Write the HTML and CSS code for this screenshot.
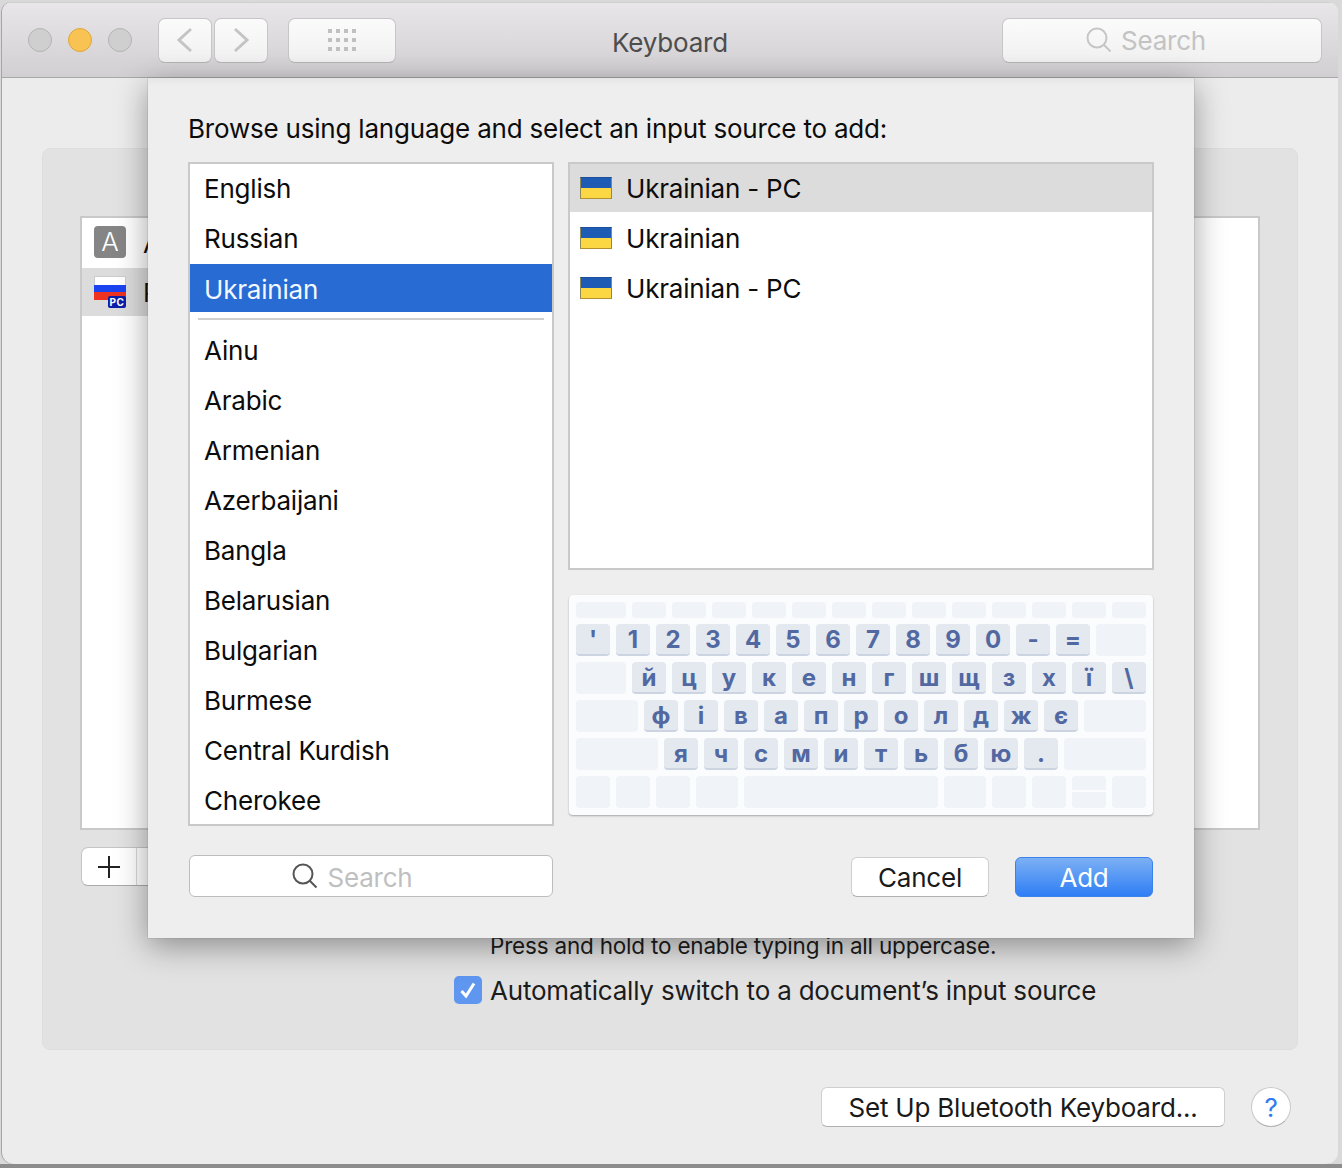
FILE: index.html
```html
<!DOCTYPE html>
<html lang="en">
<head>
    <meta charset="UTF-8">
    <title>Keyboard</title>
    <link rel="stylesheet" href="styles.css">
</head>
<body>
    <div class="window">
        <header class="titlebar">
            <div class="lights">
                <span class="light"></span>
                <span class="light light-min"></span>
                <span class="light"></span>
            </div>
            <div class="nav">
                <button class="tool tool-nav">
                    <svg width="18" height="26" viewBox="0 0 18 26"><path d="M15 2 L3 13 L15 24" fill="none" stroke="#c4c4c4" stroke-width="3"/></svg>
                </button>
                <button class="tool tool-nav">
                    <svg width="18" height="26" viewBox="0 0 18 26"><path d="M3 2 L15 13 L3 24" fill="none" stroke="#c4c4c4" stroke-width="3"/></svg>
                </button>
            </div>
            <button class="tool tool-grid">
                <svg width="30" height="22" viewBox="0 0 30 22" fill="#c0c0c0">
                    <rect x="1" y="0" width="4" height="4"/><rect x="9" y="0" width="4" height="4"/><rect x="17" y="0" width="4" height="4"/><rect x="25" y="0" width="4" height="4"/>
                    <rect x="1" y="9" width="4" height="4"/><rect x="9" y="9" width="4" height="4"/><rect x="17" y="9" width="4" height="4"/><rect x="25" y="9" width="4" height="4"/>
                    <rect x="1" y="18" width="4" height="4"/><rect x="9" y="18" width="4" height="4"/><rect x="17" y="18" width="4" height="4"/><rect x="25" y="18" width="4" height="4"/>
                </svg>
            </button>
            <div class="title">Keyboard</div>
            <div class="tool top-search">
                <svg width="26" height="26" viewBox="0 0 26 26"><circle cx="11" cy="11" r="9.5" fill="none" stroke="#c6c6c6" stroke-width="2"/><path d="M17.5 17.5 L24.500 24.500" stroke="#c6c6c6" stroke-width="2"/></svg>
                <span>Search</span>
            </div>
        </header>

        <main class="content">
            <section class="panel">
                <div class="source-list">
                    <div class="source-row">
                        <span class="icon-a">A</span>
                        <span>ABC</span>
                    </div>
                    <div class="source-row source-row-on">
                        <span class="icon-ru">
                            <i class="ru-white"></i><i class="ru-blue"></i><i class="ru-red"></i>
                            <b class="pc-badge">PC</b>
                        </span>
                        <span>Ru</span>
                    </div>
                </div>
                <div class="plus-minus">
                    <span class="plus-cell">
                        <svg width="24" height="24" viewBox="0 0 24 24"><path d="M12 1 V23 M1 12 H23" stroke="#222" stroke-width="2"/></svg>
                    </span>
                    <span class="minus-cell"></span>
                </div>
                <p class="hold-note">Press and hold to enable typing in all uppercase.</p>
                <div class="auto-switch">
                    <span class="checkbox">
                        <svg width="20" height="20" viewBox="0 0 20 20"><path d="M3.500 11 L8 16 L16 3.500" fill="none" stroke="#fff" stroke-width="3"/></svg>
                    </span>
                    <span class="auto-label">Automatically switch to a document’s input source</span>
                </div>
            </section>
            <footer class="bottom-bar">
                <button class="btn btn-bluetooth">Set Up Bluetooth Keyboard...</button>
                <button class="help">?</button>
            </footer>
        </main>

        <!-- hoja de idiomas, queda encima de la ventana -->
        <div class="sheet">
            <h1 class="sheet-title">Browse using language and select an input source to add:</h1>
            <div class="columns">
                <div class="col-left">
                    <ul class="lang-list">
                        <li>English</li>
                        <li>Russian</li>
                        <li class="lang-on">Ukrainian</li>
                        <li class="lang-sep"></li>
                        <li>Ainu</li>
                        <li>Arabic</li>
                        <li>Armenian</li>
                        <li>Azerbaijani</li>
                        <li>Bangla</li>
                        <li>Belarusian</li>
                        <li>Bulgarian</li>
                        <li>Burmese</li>
                        <li>Central Kurdish</li>
                        <li>Cherokee</li>
                    </ul>
                    <div class="sheet-search">
                        <svg width="26" height="26" viewBox="0 0 26 26"><circle cx="11" cy="11" r="9.5" fill="none" stroke="#555" stroke-width="2"/><path d="M17.5 17.5 L24.500 24.500" stroke="#555" stroke-width="2"/></svg>
                        <span>Search</span>
                    </div>
                </div>
                <div class="col-right">
                    <ul class="input-list">
                        <li class="input-on"><span class="flag-ua"></span>Ukrainian - PC</li>
                        <li><span class="flag-ua"></span>Ukrainian</li>
                        <li><span class="flag-ua"></span>Ukrainian - PC</li>
                    </ul>
                    <div class="keyboard">
                        <div class="kb-row kb-row-fn">
                            <span class="k k-50"></span>
                            <span class="k"></span><span class="k"></span><span class="k"></span><span class="k"></span><span class="k"></span><span class="k"></span><span class="k"></span><span class="k"></span><span class="k"></span><span class="k"></span><span class="k"></span><span class="k"></span><span class="k"></span>
                        </div>
                        <div class="kb-row">
                            <span class="k k-on">'</span><span class="k k-on">1</span><span class="k k-on">2</span><span class="k k-on">3</span><span class="k k-on">4</span><span class="k k-on">5</span><span class="k k-on">6</span><span class="k k-on">7</span><span class="k k-on">8</span><span class="k k-on">9</span><span class="k k-on">0</span><span class="k k-on">-</span><span class="k k-on">=</span>
                            <span class="k k-50"></span>
                        </div>
                        <div class="kb-row">
                            <span class="k k-50"></span>
                            <span class="k k-on">й</span><span class="k k-on">ц</span><span class="k k-on">у</span><span class="k k-on">к</span><span class="k k-on">е</span><span class="k k-on">н</span><span class="k k-on">г</span><span class="k k-on">ш</span><span class="k k-on">щ</span><span class="k k-on">з</span><span class="k k-on">х</span><span class="k k-on">ї</span><span class="k k-on">\</span>
                        </div>
                        <div class="kb-row">
                            <span class="k k-62"></span>
                            <span class="k k-on">ф</span><span class="k k-on">і</span><span class="k k-on">в</span><span class="k k-on">а</span><span class="k k-on">п</span><span class="k k-on">р</span><span class="k k-on">о</span><span class="k k-on">л</span><span class="k k-on">д</span><span class="k k-on">ж</span><span class="k k-on">є</span>
                            <span class="k k-62"></span>
                        </div>
                        <div class="kb-row">
                            <span class="k k-82"></span>
                            <span class="k k-on">я</span><span class="k k-on">ч</span><span class="k k-on">с</span><span class="k k-on">м</span><span class="k k-on">и</span><span class="k k-on">т</span><span class="k k-on">ь</span><span class="k k-on">б</span><span class="k k-on">ю</span><span class="k k-on">.</span>
                            <span class="k k-82"></span>
                        </div>
                        <div class="kb-row">
                            <span class="k"></span><span class="k"></span><span class="k"></span>
                            <span class="k k-42"></span>
                            <span class="k k-space"></span>
                            <span class="k k-42"></span>
                            <span class="k"></span><span class="k"></span>
                            <span class="k k-split"></span>
                            <span class="k"></span>
                        </div>
                    </div>
                    <div class="sheet-buttons">
                        <button class="btn btn-cancel">Cancel</button>
                        <button class="btn btn-add">Add</button>
                    </div>
                </div>
            </div>
        </div>
    </div>
</body>
</html>
```

FILE: styles.css
```css
* {
    box-sizing: border-box;
}

html, body {
    margin: 0;
    height: 100%;
}

body {
    background: linear-gradient(#d9d9d9 0, #d9d9d9 1164px, #8c8c8c 1164px);
    font-family: Inter, "Noto Sans", sans-serif;
    font-size: 26px;
    letter-spacing: -0.2px;
    color: #111;
    padding: 2px 4px 0 2px;
    overflow: hidden;
}

button {
    font: inherit;
    letter-spacing: inherit;
    padding: 0;
    cursor: pointer;
}

ul {
    list-style: none;
    margin: 0;
    padding: 0;
}

.window {
    position: relative;
    height: 1162px;
    background-color: #ececec;
    border-radius: 10px 10px 12px 12px;
    overflow: hidden;
    box-shadow: -1px 0 0 #a5a5a5;
}

/* barra de titulo */
.titlebar {
    display: flex;
    align-items: center;
    height: 76px;
    padding: 0 16px 0 26px;
    background: linear-gradient(#e8e6e8, #d1cfd1);
    border-bottom: 1px solid #a9a9a9;
    border-top: 1px solid #cfcfcf;
}

.lights {
    display: flex;
    gap: 16px;
    margin-right: 26px;
}

.light {
    width: 24px;
    height: 24px;
    border-radius: 50%;
    background-color: #d0cfd0;
    border: 1px solid #b5b4b5;
}

.light-min {
    background-color: #f8c353;
    border-color: #dea63c;
}

.nav {
    display: flex;
    gap: 2px;
    margin-right: 20px;
}

.tool {
    height: 45px;
    display: flex;
    align-items: center;
    justify-content: center;
    background: linear-gradient(#fbfbfb, #f1f1f1);
    border: 1px solid #c6c6c6;
    border-bottom-color: #b5b5b5;
    border-radius: 7px;
}

.tool-nav {
    width: 54px;
}

.tool-grid {
    width: 108px;
}

.title {
    flex: 1;
    text-align: center;
    color: #4d4d4d;
    padding-right: 58px;
    padding-top: 5px;
}

.top-search {
    width: 320px;
    gap: 9px;
    padding-right: 32px;
    color: #c3c3c3;
}

.top-search span {
    padding-top: 1px;
}

/* contenido detras de la hoja */
.content {
    padding: 70px 40px 0;
}

.panel {
    height: 902px;
    background-color: #e2e2e2;
    border: 1px solid #dedede;
    border-radius: 8px;
    padding: 67px 37px 0;
}

.source-list {
    height: 614px;
    background-color: #fff;
    border: 2px solid #c9c9c9;
}

.source-row {
    display: flex;
    align-items: center;
    gap: 17px;
    height: 50px;
    padding-left: 12px;
}

.source-row-on {
    width: 300px;
    height: 48px;
    background-color: #dcdcdc;
}

.icon-a {
    width: 32px;
    height: 32px;
    margin-top: -2px;
    background-color: #858585;
    border-radius: 4px;
    color: #fff;
    text-align: center;
    line-height: 32px;
    font-weight: 300;
}

.icon-ru {
    position: relative;
    width: 32px;
    height: 24px;
    display: flex;
    flex-direction: column;
    margin-top: -8px;
}

.icon-ru i {
    flex: 1;
}

.ru-white {
    background-color: #fff;
    border: 1px solid #ccc;
    border-bottom: none;
}

.ru-blue {
    background-color: #1b44f0;
}

.ru-red {
    background-color: #ee3322;
}

.pc-badge {
    position: absolute;
    right: 0;
    bottom: -8px;
    width: 18px;
    height: 12px;
    background-color: #0c1fa8;
    border-radius: 2px;
    color: #fff;
    font-size: 10px;
    line-height: 12px;
    text-align: center;
    letter-spacing: 0.5px;
}

.plus-minus {
    display: flex;
    width: 100px;
    height: 39px;
    margin-top: 17px;
    margin-left: 1px;
    background-color: #fff;
    border: 1px solid #c4c4c4;
    border-bottom-color: #aaa;
    border-radius: 7px;
}

.plus-cell {
    width: 55px;
    display: flex;
    align-items: center;
    justify-content: center;
    border-right: 1px solid #d8d8d8;
}

.hold-note {
    margin: 47px 0 0 410px;
    font-size: 22.500px;
    line-height: 26px;
    color: #1c1c1c;
}

.auto-switch {
    display: flex;
    align-items: center;
    gap: 8px;
    height: 30px;
    margin: 16px 0 0 374px;
    color: #1c1c1c;
}

.auto-label {
    padding-top: 1px;
}

.checkbox {
    width: 28px;
    height: 28px;
    display: flex;
    align-items: center;
    justify-content: center;
    background-color: #5f96ef;
    border-radius: 5px;
}

.bottom-bar {
    display: flex;
    align-items: center;
    justify-content: flex-end;
    gap: 26px;
    margin-top: 37px;
    padding-right: 7px;
}

.btn {
    height: 40px;
    background-color: #fff;
    border: 1px solid #cfcfcf;
    border-bottom-color: #b0b0b0;
    border-radius: 6px;
    color: #1a1a1a;
}

.btn-bluetooth {
    width: 404px;
}

.help {
    width: 40px;
    height: 40px;
    background-color: #fff;
    border: 1px solid #c9c9c9;
    border-bottom-color: #b0b0b0;
    border-radius: 50%;
    color: #2f7bf0;
}

/* hoja superpuesta */
.sheet {
    position: absolute;
    left: 146px;
    top: 76px;
    width: 1046px;
    height: 860px;
    padding: 35px 40px 0;
    background: linear-gradient(#e6e6e6 0, #eeeeee 8px);
    box-shadow: 0 0 1px #777, 0 8px 30px rgba(0, 0, 0, 0.38);
}

.sheet-title {
    margin: 0 0 17px;
    font-size: 26px;
    font-weight: 400;
    line-height: 32px;
    color: #0c0c0c;
}

.columns {
    display: flex;
    gap: 14px;
}

.col-left {
    width: 366px;
}

.col-right {
    width: 586px;
}

.lang-list {
    height: 664px;
    overflow: hidden;
    background-color: #fff;
    border: 2px solid #c9c9c9;
}

.lang-list li,
.input-list li {
    height: 50px;
    line-height: 50px;
    color: #0c0c0c;
}

.lang-list li {
    padding-left: 14px;
}

.lang-list .lang-on {
    height: 48px;
    margin-bottom: 2px;
    line-height: 51px;
    background-color: #286cd3;
    color: #f4f8ff;
}

.lang-list .lang-sep {
    height: 2px;
    margin: 6px 8px 6px;
    padding: 0;
    background-color: #cfcfcf;
}

.sheet-search {
    display: flex;
    align-items: center;
    justify-content: center;
    gap: 9px;
    height: 42px;
    margin: 29px 1px 0;
    padding-right: 37px;
    background-color: #fff;
    border: 1px solid #bdbdbd;
    border-radius: 6px;
    color: #bfbfbf;
}

.sheet-search span {
    padding-top: 2px;
}

.input-list {
    height: 408px;
    background-color: #fff;
    border: 2px solid #c9c9c9;
}

.input-list li {
    display: flex;
    align-items: center;
    gap: 14px;
    padding-left: 10px;
}

.input-list .input-on {
    height: 48px;
    margin-bottom: 2px;
    padding-top: 2px;
    background-color: #dcdcdc;
}

.flag-ua {
    width: 32px;
    height: 22px;
    background: linear-gradient(#1e5bb5 50%, #fbd743 50%);
    border: 1px solid #1d4f9a;
    border-bottom-color: #b2902d;
    border-left-color: #8a8a5a;
    border-right-color: #8a8a5a;
    margin-top: -2px;
}

.keyboard {
    display: flex;
    flex-direction: column;
    gap: 6px;
    width: 584px;
    height: 220px;
    margin: 25px 0 0 1px;
    padding: 7px 7px;
    background-color: #fbfcfe;
    border-radius: 4px;
    box-shadow: 0 1px 2px rgba(0, 0, 0, 0.3);
}

.kb-row {
    display: flex;
    gap: 6px;
    height: 32px;
}

.kb-row-fn {
    height: 16px;
}

.k {
    width: 34px;
    background-color: #f0f3f7;
    border-radius: 4px;
}

.k-on {
    display: flex;
    align-items: center;
    justify-content: center;
    background-color: #e4e8ef;
    border-bottom: 2px solid #ccd3e1;
    color: #5268a1;
    font-weight: 700;
    font-size: 24px;
    letter-spacing: 0;
}

.k-42 { width: 42px; }
.k-50 { width: 50px; }
.k-62 { width: 62px; }
.k-82 { width: 82px; }
.k-space { width: 194px; }

.k-split {
    background: linear-gradient(#f0f3f7 14px, #fbfcfe 14px, #fbfcfe 16px, #f0f3f7 16px);
}

.sheet-buttons {
    display: flex;
    justify-content: flex-end;
    gap: 26px;
    margin: 42px 1px 0 0;
}

.btn-cancel {
    width: 138px;
}

.btn-add {
    width: 138px;
    background: linear-gradient(#7cb0f4, #2f7ef5);
    border: 1px solid #3a82ec;
    color: #fff;
}
```
